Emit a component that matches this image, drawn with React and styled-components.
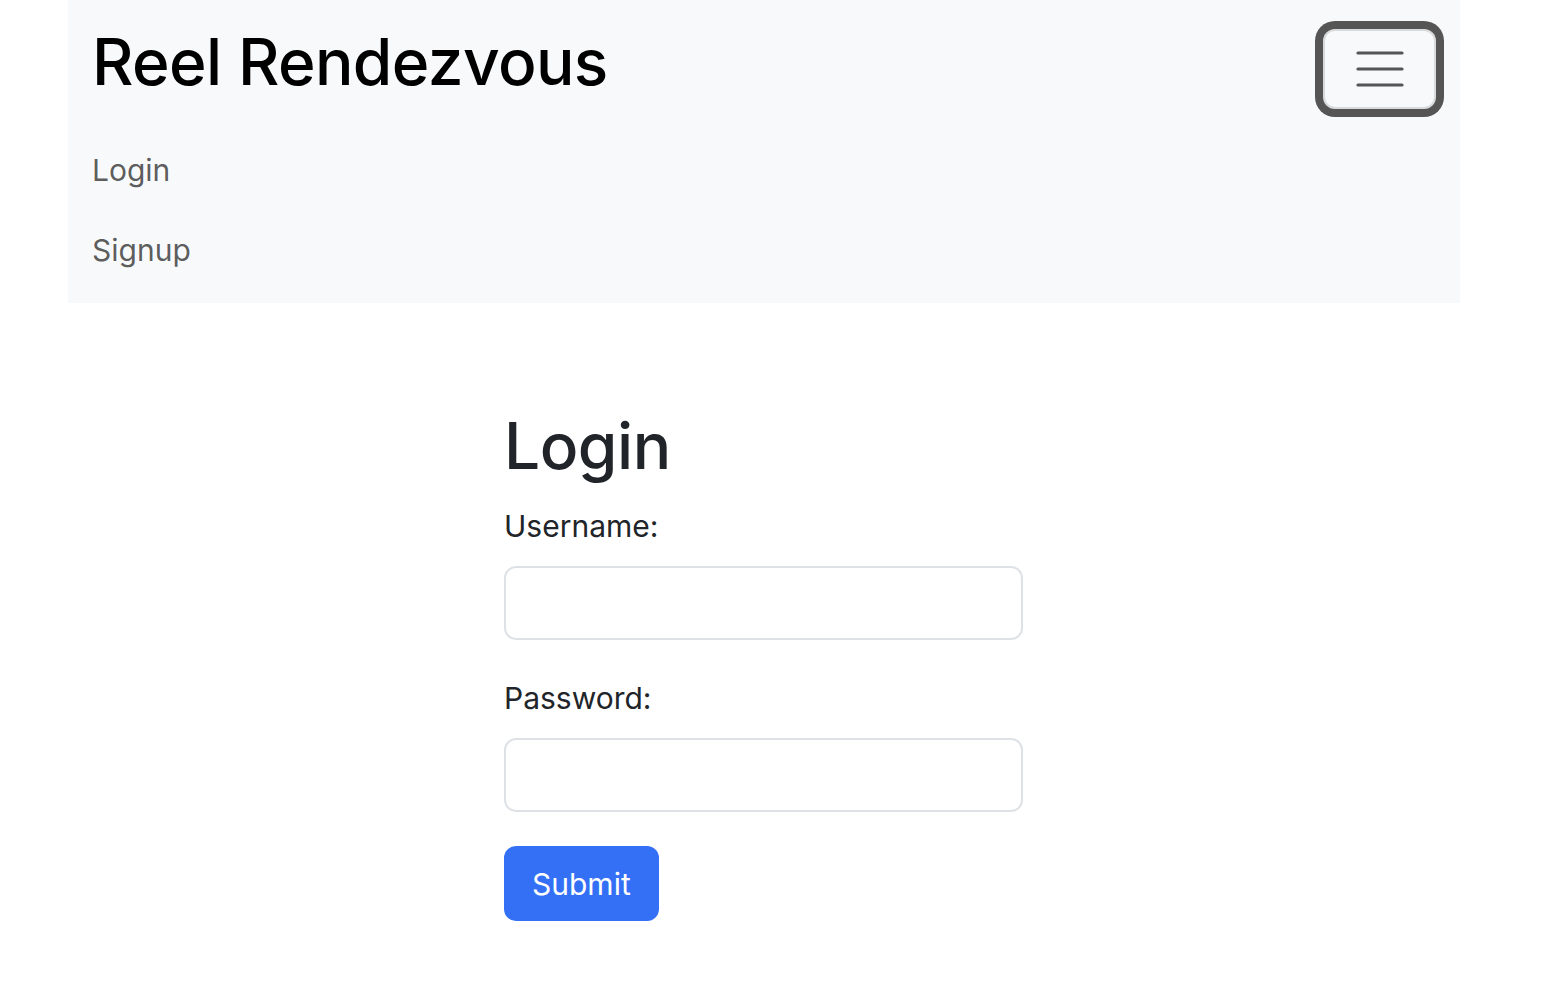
import React from "react";
import styled, { createGlobalStyle } from "styled-components";

const GlobalStyle = createGlobalStyle`
  * {
    box-sizing: border-box;
  }
  body {
    margin: 0;
    background: #fff;
    font-family: Inter, "Noto Sans", "Liberation Sans", sans-serif;
    color: #212529;
  }
`;

const Page = styled.div`
  width: 100%;
  min-height: 982px;
`;

const NavBar = styled.nav`
  width: 1392px;
  margin-left: 68px;
  background: #f8f9fa;
  padding: 16px 16px 13px 24px;
  display: flex;
  flex-direction: column;
`;

const NavHeader = styled.div`
  height: 106px;
  display: flex;
  align-items: center;
  justify-content: space-between;
`;

const Brand = styled.a`
  font-size: 64px;
  font-weight: 500;
  letter-spacing: -0.6px;
  color: #000;
  text-decoration: none;
  line-height: 1;
  margin-top: -14px;
`;

const Toggler = styled.button`
  width: 113px;
  height: 80px;
  padding: 8px 24px;
  margin-right: 8px;
  background: transparent;
  border: 2px solid rgba(0, 0, 0, 0.12);
  border-radius: 12px;
  box-shadow: 0 0 0 8px #555;
  display: flex;
  align-items: center;
  justify-content: center;
  cursor: pointer;
`;

const NavList = styled.ul`
  list-style: none;
  margin: 8px 0 0;
  padding: 0;
`;

const NavLink = styled.a`
  display: block;
  padding: 16px 0;
  font-size: 30px;
  line-height: 48px;
  color: rgba(0, 0, 0, 0.65);
  text-decoration: none;
`;

const Main = styled.main`
  padding: 103px 0 0 504px;
`;

const Form = styled.form`
  width: 519px;
`;

const Title = styled.h1`
  margin: 0 0 16px;
  font-size: 64px;
  font-weight: 500;
  line-height: 80px;
  letter-spacing: -0.5px;
  color: #212529;
`;

const Field = styled.div`
  margin-bottom: ${(p) => p.$gap || 34}px;
`;

const Label = styled.label`
  display: block;
  font-size: 30px;
  line-height: 48px;
  margin-bottom: 16px;
  color: #212529;
`;

const Input = styled.input`
  display: block;
  width: 100%;
  height: 74px;
  padding: 12px 24px;
  font-size: 30px;
  font-family: inherit;
  border: 2px solid #dee2e6;
  border-radius: 12px;
  background: #fff;
  outline: none;
`;

const SubmitButton = styled.button`
  height: 75px;
  padding: 0 26px;
  font-family: inherit;
  font-size: 30px;
  color: #fff;
  background: #3470f5;
  border: 2px solid #3470f5;
  border-radius: 12px;
  cursor: pointer;
`;

const MenuIcon = () => (
  <svg width="60" height="60" viewBox="0 0 30 30">
    <path
      d="M4 7h22M4 15h22M4 23h22"
      stroke="#555"
      strokeWidth="1.6"
      strokeLinecap="round"
    />
  </svg>
);

export default function App() {
  return (
    <Page>
      <GlobalStyle />
      <NavBar>
        <NavHeader>
          <Brand href="#">Reel Rendezvous</Brand>
          <Toggler type="button" aria-label="Toggle navigation">
            <MenuIcon />
          </Toggler>
        </NavHeader>
        <NavList>
          <li>
            <NavLink href="#">Login</NavLink>
          </li>
          <li>
            <NavLink href="#">Signup</NavLink>
          </li>
        </NavList>
      </NavBar>
      <Main>
        <Form onSubmit={(e) => e.preventDefault()}>
          <Title>Login</Title>
          <Field>
            <Label htmlFor="username">Username:</Label>
            <Input id="username" type="text" />
          </Field>
          <Field $gap={34}>
            <Label htmlFor="password">Password:</Label>
            <Input id="password" type="password" />
          </Field>
          <SubmitButton type="submit">Submit</SubmitButton>
        </Form>
      </Main>
    </Page>
  );
}
